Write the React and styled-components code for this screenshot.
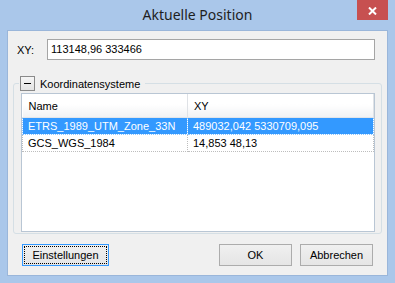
import React from "react";
import styled, { createGlobalStyle, css } from "styled-components";

const GlobalStyle = createGlobalStyle`
  html, body {
    margin: 0;
    padding: 0;
    background: #ffffff;
  }
  body {
    font-family: "Liberation Sans", Arial, sans-serif;
    font-size: 11px;
    color: #000;
  }
`;

const Window = styled.div`
  width: 395px;
  height: 283px;
  box-sizing: border-box;
  background: #aac7ea;
  display: flex;
  flex-direction: column;
`;

const TitleBar = styled.div`
  height: 30px;
  display: grid;
  grid-template-columns: 1fr auto 1fr;
  align-items: start;
`;

const Title = styled.div`
  grid-column: 2;
  font-family: "Noto Sans", "Open Sans", sans-serif;
  font-size: 14px;
  line-height: 20px;
  padding-top: 5px;
  color: #1e1e1e;
`;

const CloseButton = styled.div`
  grid-column: 3;
  justify-self: end;
  margin-right: 7px;
  width: 31px;
  height: 20px;
  background: #c75050;
  display: flex;
  align-items: center;
  justify-content: center;
  padding-top: 2px;
  box-sizing: border-box;
`;

const Client = styled.div`
  flex: 1;
  margin: 0 7px 7px;
  border: 1px solid #9ab6da;
  background: #f0f0f0;
  display: flex;
  flex-direction: column;
  padding: 8px 0 9px;
  min-height: 0;
`;

const FieldRow = styled.div`
  display: flex;
  align-items: center;
  padding: 0 12px 0 9px;
`;

const Label = styled.span`
  width: 30px;
`;

const TextInput = styled.div`
  flex: 1;
  height: 21px;
  box-sizing: border-box;
  border: 1px solid #a5a5a5;
  background: #fff;
  padding: 0 3px;
  line-height: 19px;
`;

const GroupBox = styled.fieldset`
  flex: 1;
  min-height: 0;
  margin: 16px 5px 10px 5px;
  padding: 2px 6px 1px 7px;
  border: 1px solid #d5dfe5;
  border-radius: 3px;
  display: flex;
  flex-direction: column;
`;

const Legend = styled.legend`
  display: flex;
  align-items: center;
  gap: 5px;
  padding: 0 5px 0 1px;
  margin-left: -2px;
  height: 15px;
`;

const Toggle = styled.span`
  width: 13px;
  height: 13px;
  border: 1px solid #8a8a8a;
  background: linear-gradient(#f6f6f6, #e3e3e3);
  display: flex;
  align-items: center;
  justify-content: center;
  &::after {
    content: "";
    width: 7px;
    height: 1px;
    background: #000;
  }
`;

const ListView = styled.div`
  flex: 1;
  border: 1px solid #b9c6d4;
  background: #fff;
  overflow: hidden;
`;

const Table = styled.table`
  border-collapse: collapse;
  table-layout: fixed;
  width: 351px;
`;

const HeaderCell = styled.th`
  height: 23px;
  padding: 0 0 0 6px;
  text-align: left;
  font-weight: normal;
  background: linear-gradient(#ffffff 0%, #ffffff 45%, #f1f2f4 100%);
  border-right: 1px solid #dfe2e6;
  border-bottom: 1px solid #e2e5e9;
`;

const Cell = styled.td`
  height: 16px;
  padding: 0 0 0 5px;
  white-space: nowrap;
  overflow: hidden;
  border: 1px dotted #bdbdbd;
  border-top: none;
  ${(p) =>
    p.$selected &&
    css`
      background: #3399ff;
      color: #fff;
      border-color: #8cc6ff;
    `}
`;

const ButtonRow = styled.div`
  display: flex;
  gap: 8px;
  padding: 0 14px;
`;

const Spacer = styled.div`
  flex: 1;
`;

const Button = styled.div`
  width: ${(p) => p.$width || 73}px;
  height: 22px;
  box-sizing: border-box;
  border: 1px solid ${(p) => (p.$focused ? "#3399ff" : "#acacac")};
  background: linear-gradient(#f0f0f0, #e5e5e5);
  display: flex;
  align-items: center;
  justify-content: center;
  padding: 1px;
`;

const ButtonFace = styled.span`
  flex: 1;
  align-self: stretch;
  display: flex;
  align-items: center;
  justify-content: center;
  border: 1px dotted ${(p) => (p.$focused ? "#000" : "transparent")};
`;

const rows = [
  { name: "ETRS_1989_UTM_Zone_33N", xy: "489032,042 5330709,095", selected: true },
  { name: "GCS_WGS_1984", xy: "14,853 48,13" },
];

export default function App() {
  return (
    <>
      <GlobalStyle />
      <Window>
        <TitleBar>
          <Title>Aktuelle Position</Title>
          <CloseButton>
            <svg width="9" height="8" viewBox="0 0 9 8">
              <path d="M1 0.5 L8 7.5 M8 0.5 L1 7.5" stroke="#fff" strokeWidth="2" />
            </svg>
          </CloseButton>
        </TitleBar>
        <Client>
          <FieldRow>
            <Label>XY:</Label>
            <TextInput>113148,96 333466</TextInput>
          </FieldRow>
          <GroupBox>
            <Legend>
              <Toggle />
              Koordinatensysteme
            </Legend>
            <ListView>
              <Table>
                <colgroup>
                  <col style={{ width: 165 }} />
                  <col style={{ width: 186 }} />
                </colgroup>
                <thead>
                  <tr>
                    <HeaderCell>Name</HeaderCell>
                    <HeaderCell>XY</HeaderCell>
                  </tr>
                </thead>
                <tbody>
                  {rows.map((r) => (
                    <tr key={r.name}>
                      <Cell $selected={r.selected}>{r.name}</Cell>
                      <Cell $selected={r.selected}>{r.xy}</Cell>
                    </tr>
                  ))}
                </tbody>
              </Table>
            </ListView>
          </GroupBox>
          <ButtonRow>
            <Button $width={87} $focused>
              <ButtonFace $focused>Einstellungen</ButtonFace>
            </Button>
            <Spacer />
            <Button>
              <ButtonFace>OK</ButtonFace>
            </Button>
            <Button>
              <ButtonFace>Abbrechen</ButtonFace>
            </Button>
          </ButtonRow>
        </Client>
      </Window>
    </>
  );
}
